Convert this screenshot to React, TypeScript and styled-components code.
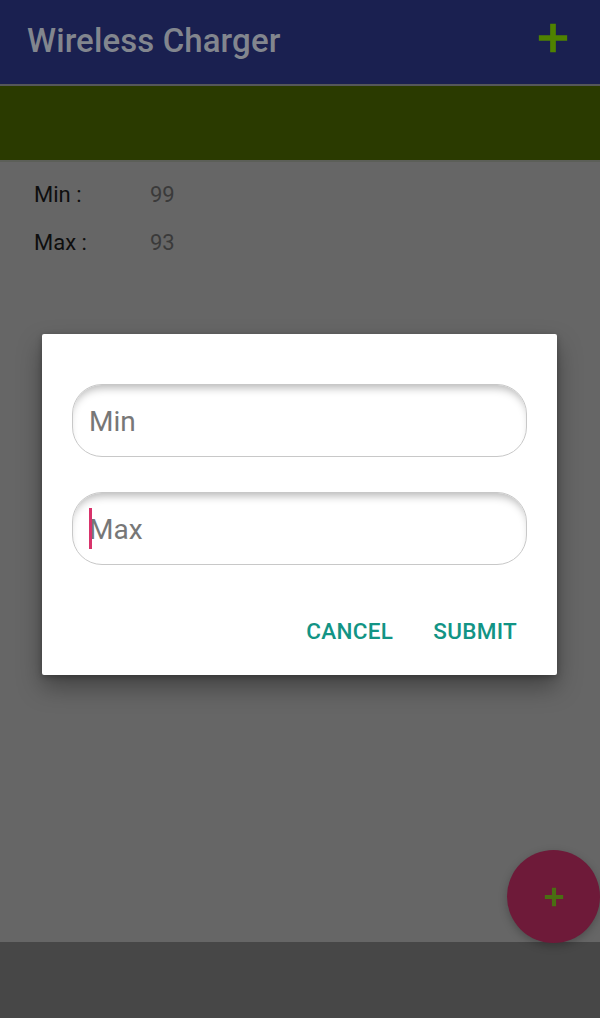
import React from "react";
import styled, { createGlobalStyle } from "styled-components";

const Global = createGlobalStyle`
  html, body { margin: 0; padding: 0; }
  body { font-family: Roboto, "Noto Sans", "Liberation Sans", sans-serif; background: #666666; }
  #root { height: 1018px; }
`;

const Screen = styled.div`
  position: relative;
  width: 600px;
  height: 1018px;
  display: flex;
  flex-direction: column;
  background: #666666;
  overflow: hidden;
`;

const AppBar = styled.header`
  height: 86px;
  flex: none;
  background: #1a2050;
  display: flex;
  align-items: center;
  justify-content: space-between;
  padding: 0 30px 0 27px;
  box-sizing: border-box;
  border-bottom: 2px solid #55575a;
`;

const Title = styled.h1`
  margin: 0;
  font-size: 33px;
  font-weight: 500;
  color: #82868e;
  letter-spacing: 0.1px;
  padding-bottom: 3px;
`;

const IconButton = styled.span`
  display: flex;
  width: 34px;
  height: 34px;
  margin-top: -8px;
`;

const Band = styled.div`
  height: 74px;
  flex: none;
  background: #2a3a00;
  border-bottom: 2px solid #5c5f58;
`;

const Stats = styled.div`
  padding: 20px 0 0 34px;
  display: flex;
  flex-direction: column;
  gap: 22px;
`;

const StatRow = styled.div`
  display: flex;
  align-items: center;
  font-size: 22px;
  line-height: 26px;
`;

const Label = styled.span`
  width: 116px;
  color: #0e0e0e;
`;

const Value = styled.span`
  color: #3a3a3a;
`;

const Spacer = styled.div`
  flex: 1;
`;

const BottomBar = styled.div`
  height: 76px;
  flex: none;
  background: #474747;
`;

const Fab = styled.div`
  position: absolute;
  left: 507px;
  top: 850px;
  width: 93px;
  height: 93px;
  border-radius: 50%;
  background: #6e1a39;
  display: flex;
  align-items: center;
  justify-content: center;
  box-shadow: 0 3px 8px rgba(0, 0, 0, 0.25);
`;

const Dialog = styled.div`
  position: absolute;
  left: 42px;
  top: 334px;
  width: 515px;
  height: 341px;
  background: #ffffff;
  border-radius: 2px;
  box-shadow: 0 12px 24px rgba(0, 0, 0, 0.35), 0 2px 6px rgba(0, 0, 0, 0.25);
  box-sizing: border-box;
  padding: 50px 30px 0 30px;
  display: flex;
  flex-direction: column;
`;

const Fields = styled.div`
  display: flex;
  flex-direction: column;
  gap: 35px;
`;

const Field = styled.div`
  position: relative;
  height: 73px;
  border: 1.5px solid #c8c8c8;
  border-radius: 30px;
  box-sizing: border-box;
  box-shadow: inset 0 7px 8px -4px rgba(0, 0, 0, 0.28);
  display: flex;
  align-items: center;
  padding: 0 16px;
  background: #fff;
`;

const Placeholder = styled.span`
  font-size: 28px;
  color: #777777;
  padding-top: 2px;
`;

const Cursor = styled.span`
  position: absolute;
  left: 16px;
  top: 15px;
  width: 3px;
  height: 41px;
  background: #d8336b;
`;

const Actions = styled.div`
  display: flex;
  justify-content: flex-end;
  gap: 40px;
  margin-top: 53px;
  padding-right: 10px;
`;

const ActionButton = styled.span`
  font-size: 22.5px;
  font-weight: 500;
  color: #129485;
  letter-spacing: 0.3px;
`;

const Plus = ({ size, stroke, color }: { size: number; stroke: number; color: string }) => (
  <svg width={size} height={size} viewBox="0 0 24 24">
    <path d="M12 2v20M2 12h20" stroke={color} strokeWidth={stroke} fill="none" />
  </svg>
);

export default function App() {
  return (
    <Screen>
      <Global />
      <AppBar>
        <Title>Wireless Charger</Title>
        <IconButton>
          <Plus size={34} stroke={4} color="#4f8200" />
        </IconButton>
      </AppBar>
      <Band />
      <Stats>
        <StatRow>
          <Label>Min :</Label>
          <Value>99</Value>
        </StatRow>
        <StatRow>
          <Label>Max :</Label>
          <Value>93</Value>
        </StatRow>
      </Stats>
      <Spacer />
      <BottomBar />
      <Fab>
        <Plus size={22} stroke={4.5} color="#4a6e12" />
      </Fab>
      <Dialog>
        <Fields>
          <Field>
            <Placeholder>Min</Placeholder>
          </Field>
          <Field>
            <Cursor />
            <Placeholder>Max</Placeholder>
          </Field>
        </Fields>
        <Actions>
          <ActionButton>CANCEL</ActionButton>
          <ActionButton>SUBMIT</ActionButton>
        </Actions>
      </Dialog>
    </Screen>
  );
}
